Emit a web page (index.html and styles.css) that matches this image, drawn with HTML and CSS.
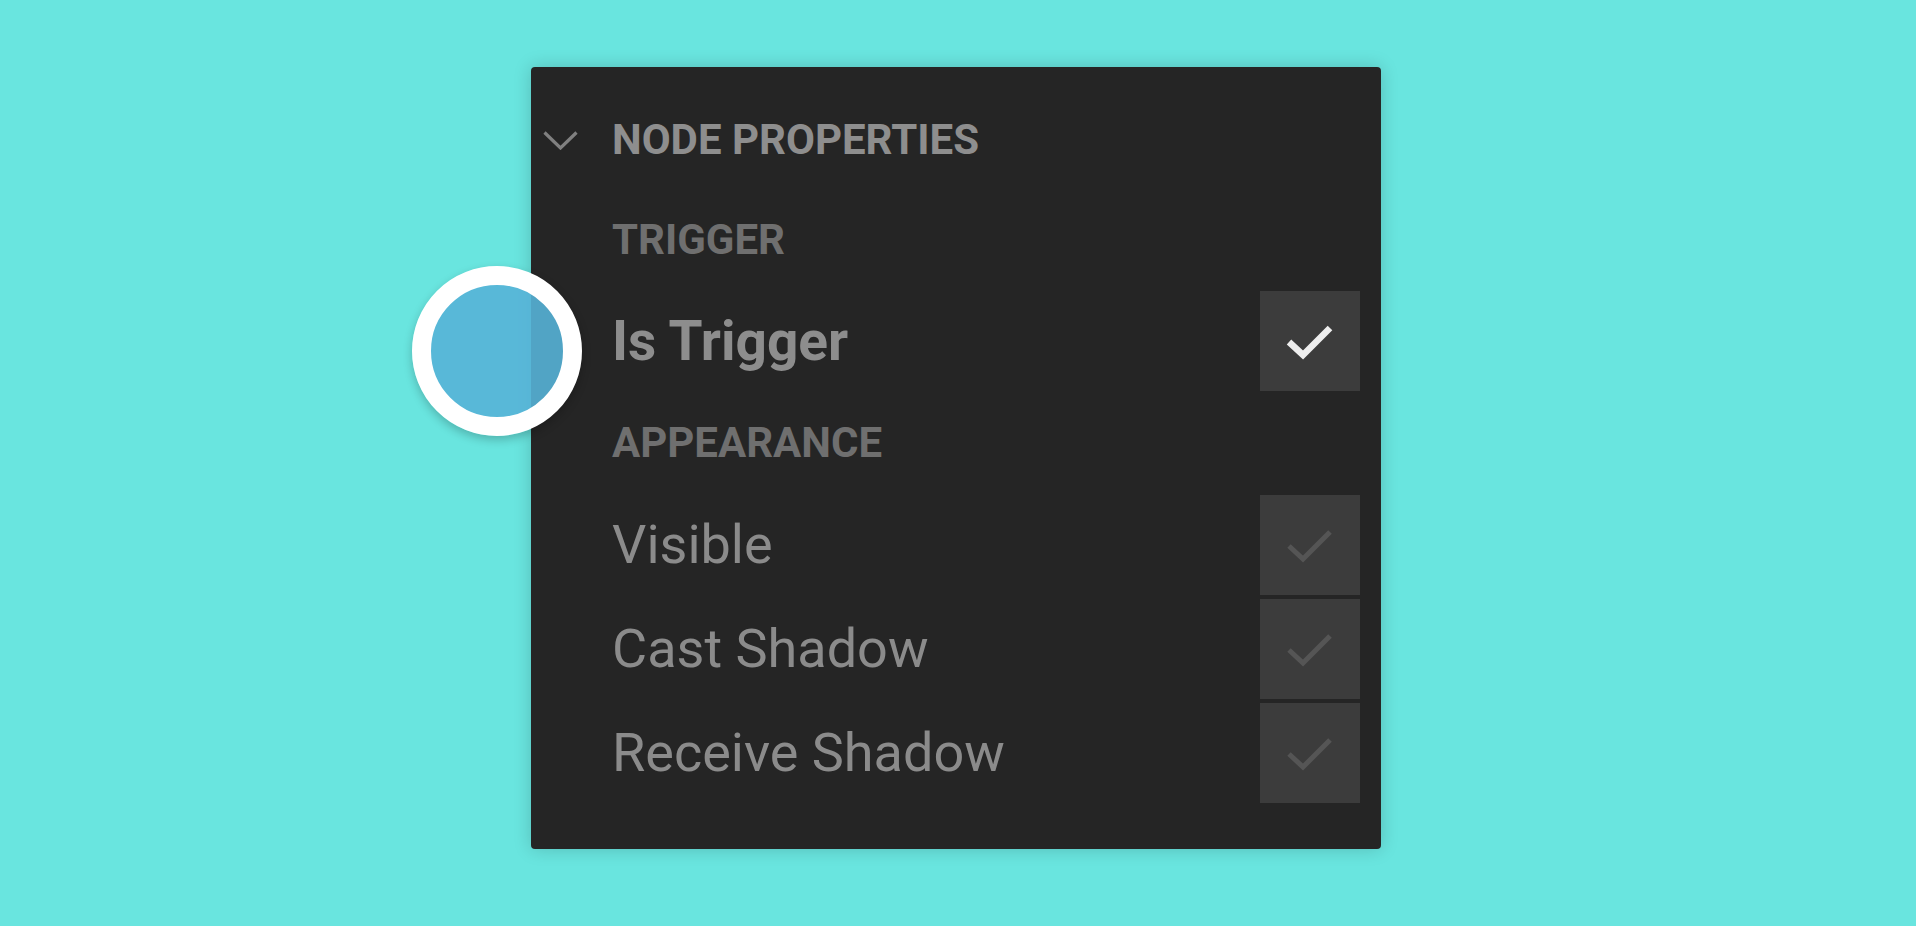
FILE: index.html
```html
<!DOCTYPE html>
<html lang="en">
<head>
<meta charset="utf-8">
<title>Node Properties</title>
<link rel="stylesheet" href="styles.css">
</head>
<body>
<div class="panel">
  <div class="panel-header">
    <span class="chevron">
      <svg width="35" height="19" viewBox="0 0 35 19"><polyline points="1.5,1.5 17.5,17 33.5,1.5" fill="none" stroke="#808080" stroke-width="3.2"/></svg>
    </span>
    <span class="panel-title">NODE PROPERTIES</span>
  </div>
  <div class="panel-body">
    <div class="section-label label-trigger">TRIGGER</div>
    <div class="prop-row prop-main">
      <span class="prop-name">Is Trigger</span>
      <span class="checkbox">
        <svg width="100" height="100" viewBox="0 0 100 100"><polyline points="29,51 43,64 70,37" fill="none" stroke="#eeeeee" stroke-width="6.5"/></svg>
      </span>
    </div>
    <div class="section-label label-appearance">APPEARANCE</div>
    <div class="prop-list">
      <div class="prop-row">
        <span class="prop-name">Visible</span>
        <span class="checkbox">
          <svg width="100" height="100" viewBox="0 0 100 100"><polyline points="29,51 43,64 70,37" fill="none" stroke="#555555" stroke-width="5"/></svg>
        </span>
      </div>
      <div class="prop-row">
        <span class="prop-name">Cast Shadow</span>
        <span class="checkbox">
          <svg width="100" height="100" viewBox="0 0 100 100"><polyline points="29,51 43,64 70,37" fill="none" stroke="#555555" stroke-width="5"/></svg>
        </span>
      </div>
      <div class="prop-row">
        <span class="prop-name">Receive Shadow</span>
        <span class="checkbox">
          <svg width="100" height="100" viewBox="0 0 100 100"><polyline points="29,51 43,64 70,37" fill="none" stroke="#555555" stroke-width="5"/></svg>
        </span>
      </div>
    </div>
  </div>
  <div class="pointer"></div>
</div>
</body>
</html>
```
FILE: styles.css
```css
html, body {
  margin: 0;
  padding: 0;
}
body {
  background: #69e5df;
  font-family: Roboto, "Liberation Sans", sans-serif;
  padding: 67px 0 0 531px;
  height: 926px;
  box-sizing: border-box;
  overflow: hidden;
}
.panel {
  position: relative;
  width: 850px;
  height: 782px;
  box-sizing: border-box;
  background: #252525;
  border-radius: 4px;
  box-shadow: 0 0 18px rgba(0, 0, 0, 0.18);
  padding: 43px 21px 46px 12px;
}
.panel-header {
  display: flex;
  align-items: center;
  height: 60px;
}
.chevron {
  width: 69px;
  display: flex;
  align-items: center;
}
.chevron svg {
  display: block;
}
.panel-title {
  font-size: 42px;
  font-weight: 700;
  line-height: 60px;
  color: #8e8e8e;
}
.panel-body {
  padding-left: 69px;
}
.section-label {
  font-size: 42px;
  font-weight: 700;
  line-height: 60px;
  color: #6f6f6f;
}
.label-trigger {
  margin-top: 40px;
}
.label-appearance {
  margin-top: 22px;
  margin-bottom: 22px;
}
.prop-main {
  margin-top: 21px;
}
.prop-list {
  display: flex;
  flex-direction: column;
  gap: 4px;
}
.prop-row {
  display: flex;
  align-items: center;
  justify-content: space-between;
  height: 100px;
}
.prop-name {
  font-size: 54px;
  line-height: 100px;
  color: #8b8b8b;
}
.prop-main .prop-name {
  font-size: 55px;
  font-weight: 700;
  color: #8d8d8d;
}
.checkbox {
  width: 100px;
  height: 100px;
  background: #3c3c3c;
}
.checkbox svg {
  display: block;
}
.pointer {
  position: absolute;
  left: -119px;
  top: 199px;
  width: 170px;
  height: 170px;
  box-sizing: border-box;
  border-radius: 50%;
  border: 19px solid #ffffff;
  background: rgba(86, 179, 215, 0.9);
  box-shadow: 0 4px 10px rgba(0, 0, 0, 0.22);
}
```
